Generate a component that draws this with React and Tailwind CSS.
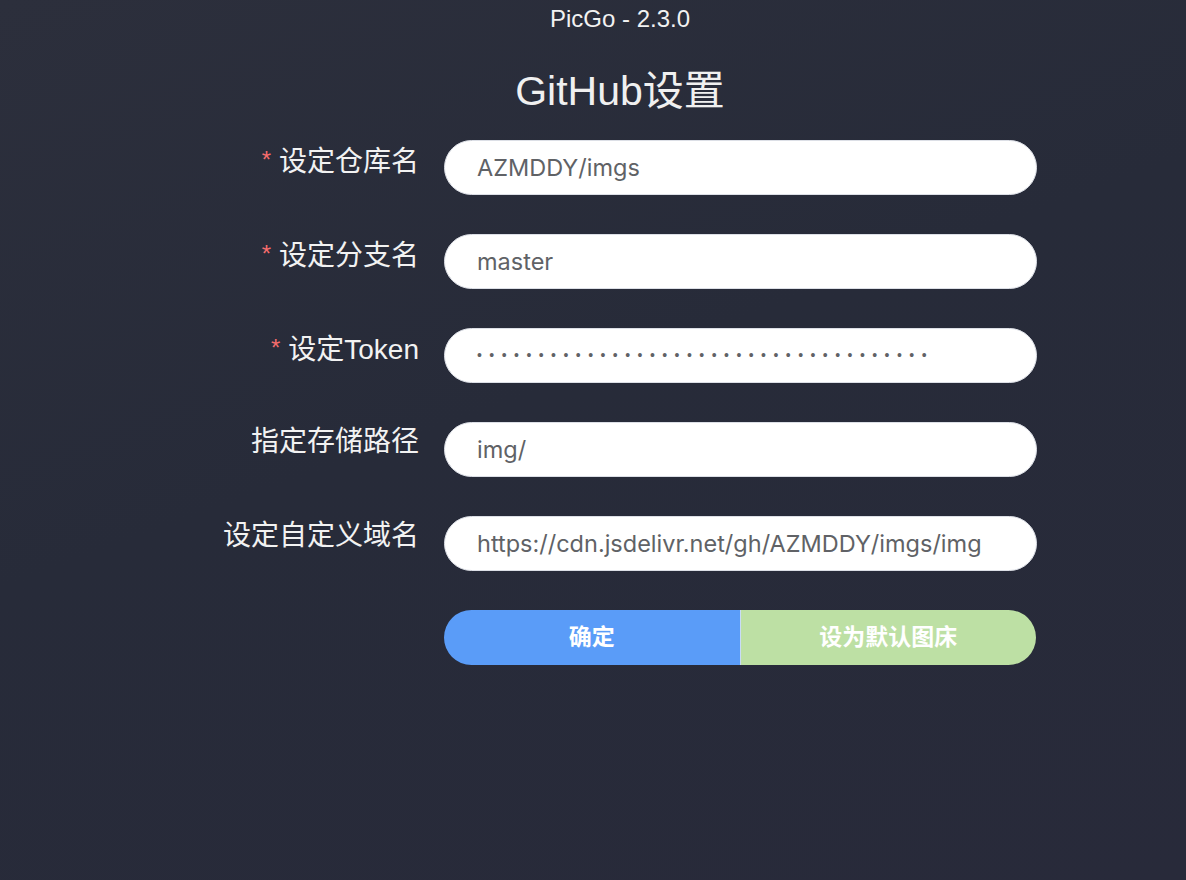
import React from "react";

const fields = [
  { label: "设定仓库名", required: true, value: "AZMDDY/imgs" },
  { label: "设定分支名", required: true, value: "master" },
  { label: "设定Token", required: true, value: "•".repeat(37), secret: true },
  { label: "指定存储路径", required: false, value: "img/" },
  { label: "设定自定义域名", required: false, value: "https://cdn.jsdelivr.net/gh/AZMDDY/imgs/img" },
];

export default function App() {
  return (
    <div
      className="min-h-[880px] w-full bg-[linear-gradient(160deg,#2c2f3c_0%,#272b39_45%,#282a3a_100%)] text-white"
      style={{ fontFamily: '"Liberation Sans", "Noto Sans CJK SC", sans-serif' }}
    >
      <div className="pl-[54px]">
        {/* 窗口标题 */}
        <div className="pt-[6px] text-center text-[24px] leading-[26px] text-[#f2f2f2]">
          PicGo - 2.3.0
        </div>

        {/* 页面标题 */}
        <h1 className="mt-[36px] text-center text-[41px] leading-[46px] text-[#f0f0f0]">
          GitHub设置
        </h1>

        {/* 表单 */}
        <div className="mt-[26px] flex flex-col gap-[39px]">
          {fields.map((f) => (
            <div key={f.label} className="flex items-start">
              <label className="w-[365px] pt-[3px] text-right text-[28px] leading-[34px] text-[#f2f2f2]">
                {f.required && (
                  <span className="mr-[8px] align-[3px] text-[24px] text-[#f56c6c]">*</span>
                )}
                {f.label}
              </label>
              <div className="ml-[25px] flex h-[55px] w-[593px] items-center rounded-full border border-[#dcdfe6] bg-white pl-[32px]">
                {f.secret ? (
                  <span className="text-[14px] tracking-[7.45px] text-[#606266]">{f.value}</span>
                ) : (
                  <span
                    className="text-[23.5px] text-[#606266]"
                    style={{ fontFamily: 'Inter, "Liberation Sans", sans-serif' }}
                  >
                    {f.value}
                  </span>
                )}
              </div>
            </div>
          ))}

          {/* 按钮组 */}
          <div className="flex">
            <div className="w-[365px]" />
            <div className="ml-[25px] flex h-[55px] w-[592px] overflow-hidden rounded-full">
              <button className="flex-1 border-r border-[#c9dcf6] bg-[#5a9cf8] text-[23px] font-bold text-white">
                确定
              </button>
              <button className="flex-1 bg-[#bde0a4] text-[23px] font-bold text-white">
                设为默认图床
              </button>
            </div>
          </div>
        </div>
      </div>
    </div>
  );
}
